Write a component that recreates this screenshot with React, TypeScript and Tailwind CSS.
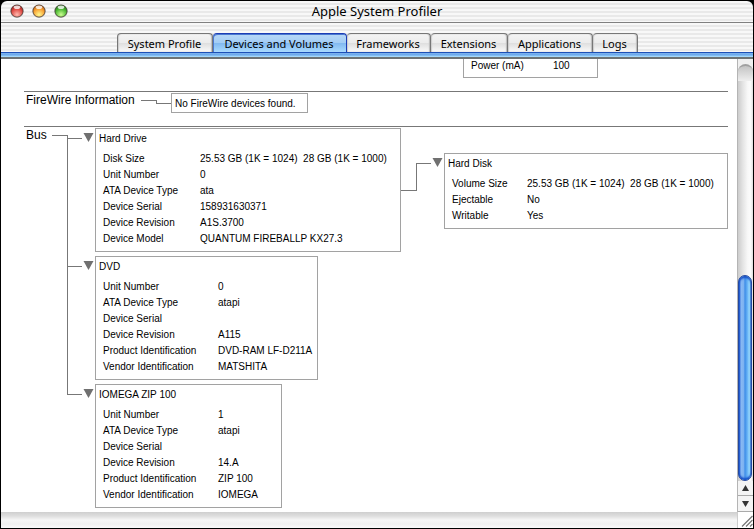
import type { ReactNode } from "react";

type Row = [string, string];

const tabs = [
  { name: "System Profile", width: "w-[96px]" },
  { name: "Devices and Volumes", width: "w-[134px]" },
  { name: "Frameworks", width: "w-[84px]" },
  { name: "Extensions", width: "w-[77px]" },
  { name: "Applications", width: "w-[85px]" },
  { name: "Logs", width: "w-[45px]" },
];

const hardDrive: Row[] = [
  ["Disk Size", "25.53 GB (1K = 1024)\u00a0 28 GB (1K = 1000)"],
  ["Unit Number", "0"],
  ["ATA Device Type", "ata"],
  ["Device Serial", "158931630371"],
  ["Device Revision", "A1S.3700"],
  ["Device Model", "QUANTUM FIREBALLP KX27.3"],
];

const hardDisk: Row[] = [
  ["Volume Size", "25.53 GB (1K = 1024)\u00a0 28 GB (1K = 1000)"],
  ["Ejectable", "No"],
  ["Writable", "Yes"],
];

const dvd: Row[] = [
  ["Unit Number", "0"],
  ["ATA Device Type", "atapi"],
  ["Device Serial", ""],
  ["Device Revision", "A115"],
  ["Product Identification", "DVD-RAM LF-D211A"],
  ["Vendor Identification", "MATSHITA"],
];

const zip: Row[] = [
  ["Unit Number", "1"],
  ["ATA Device Type", "atapi"],
  ["Device Serial", ""],
  ["Device Revision", "14.A"],
  ["Product Identification", "ZIP 100"],
  ["Vendor Identification", "IOMEGA"],
];

const stripes =
  "bg-[repeating-linear-gradient(180deg,#f8f8f8_0px,#f8f8f8_2px,#e9e9e9_2px,#e9e9e9_4px)]";

function Light({ id, label, dark, mid, glow }: { id: string; label: string; dark: string; mid: string; glow: string }) {
  return (
    <button aria-label={label} className="size-[14px]">
      <svg viewBox="0 0 14 14" className="block size-[14px]">
        <defs>
          <radialGradient id={id} cx="50%" cy="80%" r="80%">
            <stop offset="0" stopColor={glow} />
            <stop offset="0.6" stopColor={mid} />
            <stop offset="1" stopColor={dark} />
          </radialGradient>
        </defs>
        <circle cx="7" cy="7.2" r="6.6" fill="#8d8d8d" />
        <circle cx="7" cy="7" r="6" fill={`url(#${id})`} stroke="#3a2a22" strokeOpacity="0.65" strokeWidth="0.8" />
        <ellipse cx="7" cy="3.3" rx="3.3" ry="1.8" fill="#fff" fillOpacity="0.8" />
      </svg>
    </button>
  );
}

function Disclosure({ label, className }: { label: string; className: string }) {
  return (
    <button aria-label={label} aria-expanded="true" className={`h-[9px] w-[13px] shrink-0 ${className}`}>
      <svg viewBox="0 0 13 9" className="block h-[9px] w-[13px]">
        <path d="M1.5 0H11.5L6.5 9Z" fill="#707070" />
      </svg>
    </button>
  );
}

function InfoBox({ title, rows, width, labelWidth }: { title: string; rows: Row[]; width: string; labelWidth: string }) {
  return (
    <div className={`shrink-0 border border-[#a2a2a2] bg-white pt-[2px] pb-1 pl-[3px] ${width}`}>
      <h3 className="mb-1 leading-4">{title}</h3>
      <table className="ml-1 border-collapse text-left whitespace-nowrap">
        <tbody>
          {rows.map(([name, value]) => (
            <tr key={name} className="h-4 leading-4">
              <th scope="row" className={`p-0 font-normal ${labelWidth}`}>{name}</th>
              <td className="p-0">{value}</td>
            </tr>
          ))}
        </tbody>
      </table>
    </div>
  );
}

function Branch({ first, last, label, children }: { first?: boolean; last?: boolean; label: string; children: ReactNode }) {
  return (
    <li className={`flex ${last ? "" : "pb-1"}`}>
      <div className={`flex w-[15px] shrink-0 flex-col ${last ? "" : "-mb-1"}`}>
        <div className={`border-b border-l border-[#777] ${first ? "mt-[7px] h-1" : "h-[11px]"}`} />
        {!last && <div className="flex-1 border-l border-[#777]" />}
      </div>
      <Disclosure label={label} className="mt-[5px]" />
      {children}
    </li>
  );
}

export default function App() {
  return (
    <main className="flex h-screen flex-col overflow-hidden bg-black p-px font-['Liberation_Sans',Arial,sans-serif] text-[10px] text-black">
      <header className={`grid h-[22px] shrink-0 grid-cols-[1fr_auto_1fr] items-start rounded-t-md border-b border-[#808080] ${stripes}`}>
        <div className="flex gap-2 pt-[3px] pl-[9px]">
          <Light id="red" label="Close" dark="#8d1a16" mid="#df4a44" glow="#ffb9ae" />
          <Light id="amber" label="Minimize" dark="#b4540c" mid="#f7a032" glow="#fff88f" />
          <Light id="green" label="Zoom" dark="#1a6a14" mid="#4db834" glow="#ccff92" />
        </div>
        <h1 className="font-['Noto_Sans',sans-serif] text-[13px] leading-[21px]">Apple System Profiler</h1>
      </header>

      <nav className={`flex h-[29px] shrink-0 items-end justify-center font-['Noto_Sans',sans-serif] text-[11px] ${stripes}`}>
        <div role="tablist" className="flex">
          {tabs.map((tab, i) => (
            <button
              key={tab.name}
              role="tab"
              aria-selected={i === 1}
              className={`h-[19px] rounded-t-[4px] border-r text-center whitespace-nowrap ${tab.width} ${i === 0 ? "border-l" : ""} ${
                i === 1
                  ? "border-t border-[#1c3cb4] bg-[linear-gradient(180deg,#b9d8f6_0%,#a3cdf5_48%,#82b9f0_52%,#a9dbff_100%)] leading-5 shadow-[inset_1px_1px_0_#4a78d0]"
                  : "border-t border-[#777] bg-[linear-gradient(180deg,#f4f4f4_0%,#ececec_48%,#dfdfdf_52%,#fafafa_100%)] leading-5 shadow-[inset_-1px_0_1px_#bbb,inset_1px_0_1px_#ccc]"
              }`}
            >
              {tab.name}
            </button>
          ))}
        </div>
      </nav>
      <div className="h-[7px] shrink-0 border-t border-b-2 border-t-[#1c50b8] border-b-[#6d7375] bg-[linear-gradient(180deg,#7fb4ee_0%,#69a8ec_45%,#b5e6ff_100%)]" />

      <div className="flex min-h-0 flex-1">
        <div className="min-w-0 flex-1 overflow-hidden bg-white pr-[9px] pl-[23px]">
          <div className="ml-[439px] flex h-[19px] w-[135px] border border-t-0 border-[#a2a2a2] pl-[7px] leading-[13px]">
            <span className="w-[82px]">Power (mA)</span>
            <span>100</span>
          </div>

          <section className="mt-[13px] flex h-[35px] items-start border-t border-[#777]">
            <h2 className="w-[117px] shrink-0 pl-[2px] text-[12px] leading-4">FireWire Information</h2>
            <div className="mt-2 h-1 w-4 border-t border-r border-[#777]" />
            <div className="mt-[11px] w-[14px] border-t border-[#777]" />
            <p className="mt-px h-5 w-[137px] border border-[#a2a2a2] pl-[3px] leading-[19px] whitespace-nowrap">No FireWire devices found.</p>
          </section>

          <section className="flex items-start border-t border-[#777]">
            <h2 className="w-[28px] shrink-0 pl-[2px] text-[12px] leading-4">Bus</h2>
            <div className="mt-2 w-[15px] shrink-0 border-t border-[#777]" />
            <ul className="mt-px">
              <Branch first label="Hard Drive">
                <InfoBox title="Hard Drive" rows={hardDrive} width="w-[306px]" labelWidth="w-[97px]" />
                <div className="mt-[35px] h-7 w-4 shrink-0 border-r border-b border-[#777]" />
                <div className="mt-[35px] w-[14px] shrink-0 border-t border-[#777]" />
                <Disclosure label="Hard Disk" className="mt-[30px]" />
                <div className="mt-[25px]">
                  <InfoBox title="Hard Disk" rows={hardDisk} width="w-[284px]" labelWidth="w-[75px]" />
                </div>
              </Branch>
              <Branch label="DVD">
                <InfoBox title="DVD" rows={dvd} width="w-[223px]" labelWidth="w-[115px]" />
              </Branch>
              <Branch last label="IOMEGA ZIP 100">
                <InfoBox title="IOMEGA ZIP 100" rows={zip} width="w-[187px]" labelWidth="w-[115px]" />
              </Branch>
            </ul>
          </section>
        </div>

        <aside className="flex w-4 shrink-0 flex-col border-l border-[#b4b4b4] bg-[linear-gradient(90deg,#cccccc_0%,#e2e2e2_30%,#f8f8f8_65%,#fbfbfb_85%,#dddddd_100%)]">
          <div className="h-[22px] bg-[#f0f0f0] pt-[5px]">
            <div className="h-full rounded-t-full border-t-2 border-[#a0a0a0] bg-[linear-gradient(180deg,#c4c4c4_0%,#eeeeee_100%)]" />
          </div>
          <div className="flex-1" />
          <div
            role="scrollbar"
            aria-label="Vertical scroll"
            aria-controls="root"
            aria-valuenow={100}
            className="h-[206px] w-[14px] rounded-full border border-[#2448a0] bg-[linear-gradient(90deg,#1553d0_0%,#8ab9f3_16%,#7db2f1_38%,#3f8ee8_50%,#69b4f6_70%,#a3e3ff_90%,#5f8fc0_100%)] shadow-[inset_0_2px_2px_#1550c8,inset_0_-2px_2px_#1550c8]"
          />
          <button aria-label="Scroll up" className="flex h-[15px] items-center justify-center border-b border-[#aaa] bg-[#f4f4f4]">
            <svg viewBox="0 0 7 6" className="h-[6px] w-[7px]"><path d="M3.5 0L7 6H0Z" fill="#333" /></svg>
          </button>
          <button aria-label="Scroll down" className="flex h-4 items-center justify-center border-b border-[#aaa] bg-[#f4f4f4]">
            <svg viewBox="0 0 7 6" className="h-[6px] w-[7px]"><path d="M0 0H7L3.5 6Z" fill="#333" /></svg>
          </button>
        </aside>
      </div>

      <footer className="flex h-4 shrink-0 justify-end bg-[linear-gradient(180deg,#cfcfcf_0%,#dedede_25%,#f6f6f6_50%,#f0f0f0_75%,#fafafa_100%)]">
        <div className="h-full w-4 border-l border-[#ccc] bg-white">
          <svg viewBox="0 0 15 15" className="block size-[15px]">
            <path d="M4 14.5L14.5 4M8 14.5L14.5 8M12 14.5L14.5 12" stroke="#777" strokeWidth="1.2" />
          </svg>
        </div>
      </footer>
    </main>
  );
}
